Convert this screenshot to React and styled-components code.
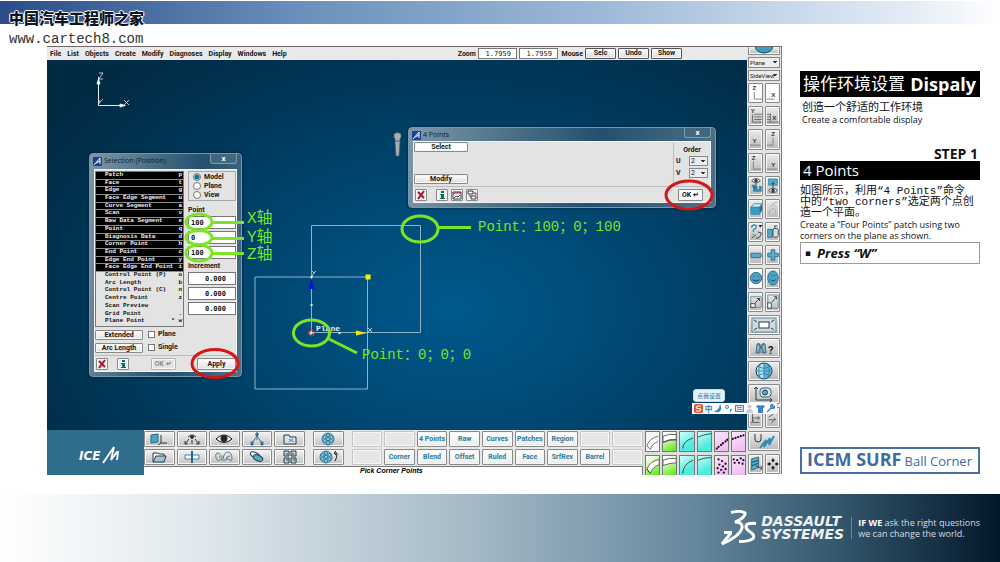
import React, { useState } from "react";
import styled, { createGlobalStyle, css } from "styled-components";

const ui = `"Roboto", "Liberation Sans", sans-serif`;
const mono = `"Liberation Mono", "Noto Sans CJK SC", monospace`;
const human = `"Open Sans", "Noto Sans CJK SC", sans-serif`;

const GlobalStyle = createGlobalStyle`
  * {
    box-sizing: border-box;
  }
  body {
    margin: 0;
    background: #fff;
    font-family: ${human};
    color: #111;
  }
  button, input, select {
    margin: 0;
    font: inherit;
    color: inherit;
  }
  h1, h2, p, ul {
    margin: 0;
    padding: 0;
    font-weight: normal;
  }
`;

/* ---------- page ---------- */

const Page = styled.div`
  display: flex;
  flex-direction: column;
  min-height: 100vh;
  position: relative;
`;

const TopBand = styled.header`
  height: 23px;
  margin-top: 1px;
  background: linear-gradient(90deg, #2b4c89 0%, #6a90bb 30%, #9db9d8 60%, #e6eef7 92%, #fff 100%);
`;

const Watermark = styled.div`
  position: absolute;
  left: 9px;
  top: 7px;
  z-index: 5;
  color: #0b1626;
`;

const WatermarkName = styled.div`
  font: 900 15px/22px "Noto Sans CJK SC", sans-serif;
  text-shadow: 1px 0 #fff, -1px 0 #fff, 0 1px #fff, 0 -1px #fff;
`;

const WatermarkUrl = styled.a`
  display: block;
  font: 14px/20px ${mono};
  color: #333;
  text-decoration: none;
`;

const Main = styled.main`
  display: grid;
  grid-template-columns: minmax(0, 1fr) 180px;
  gap: 18px;
  padding: 22px 20px 20px 47px;
`;

const Footer = styled.footer`
  display: flex;
  flex: 1;
  align-items: center;
  justify-content: flex-end;
  min-height: 68px;
  padding: 0 20px;
  color: #fff;
  background: linear-gradient(90deg, #fff 0%, #dfe8ed 20%, #a3b8c5 48%, #67889e 69%, #33566b 84%, #03172a 100%);
`;

/* ---------- modelling window ---------- */

const AppWindow = styled.section`
  position: relative;
  display: grid;
  grid-template-columns: minmax(0, 1fr) 35px;
  font: bold 7px/8px ${ui};
  color: #151515;
`;

const Workspace = styled.div`
  display: flex;
  flex-direction: column;
  min-width: 0;
`;

const MenuBar = styled.nav`
  display: flex;
  align-items: center;
  height: 14px;
  padding: 0 65px 0 3px;
  gap: 6px;
  background: #e9e9e9;
  border-top: 1px solid #76686a;
`;

const MenuItem = styled.button`
  padding: 0;
  border: 0;
  background: none;
`;

const MenuRight = styled.div`
  display: flex;
  align-items: center;
  gap: 2px;
  margin-left: auto;
`;

const ZoomInput = styled.input`
  width: 39px;
  height: 11px;
  padding: 0 5px;
  border: 1px solid #777;
  background: #fff;
  font: 7px/9px "DejaVu Sans Mono", monospace;
  text-align: right;
`;

const raised = css`
  padding: 0;
  border: 1px solid #8a8a8a;
  border-radius: 1px;
  background: linear-gradient(#fdfdfd, #dcdcdc);
  box-shadow: inset 0 0 0 1px #f6f6f6;
`;

const BarButton = styled.button`
  ${raised}
  width: 31px;
  height: 11px;
  border-color: #555;
  line-height: 9px;
`;

const Canvas = styled.div`
  position: relative;
  min-height: 370px;
  flex: 1;
  overflow: hidden;
  background: radial-gradient(ellipse 480px 320px at 58% 67%, #00598c 0%, #004c79 30%, #003d62 60%, #012b45 100%);
`;

const CanvasArt = styled.svg`
  position: absolute;
  left: 0;
  top: 0;
  width: 700px;
  height: 370px;
  pointer-events: none;
`;

const Note = styled.span`
  position: absolute;
  left: ${(p) => p.$x}px;
  top: ${(p) => p.$y}px;
  font: ${(p) => (p.$big ? "16px" : "14px")}/18px ${mono};
  color: #7ae427;
  white-space: nowrap;
`;

/* ---------- dialogs ---------- */

const Dialog = styled.div`
  position: absolute;
  left: ${(p) => p.$x}px;
  top: ${(p) => p.$y}px;
  width: ${(p) => p.$w}px;
  padding: 0 4px 4px;
  border: 1px solid #7897a8;
  border-radius: 4px;
  background: linear-gradient(100deg, #7c98a8 0%, #4f7389 30%, #235070 60%, #4d7288 100%);
  box-shadow: 0 0 3px #001a2b;
`;

const TitleBar = styled.div`
  display: flex;
  align-items: flex-start;
  height: ${(p) => p.$h}px;
  color: #0e2230;
  font: 7px/14px "Open Sans", sans-serif;
`;

const AppIcon = styled.svg`
  width: 9px;
  height: 9px;
  margin: 3px 2px 0 -1px;
`;

const CloseBox = styled.button`
  width: 27px;
  height: 10px;
  margin-left: auto;
  padding: 0;
  border: 1px solid #7f9bab;
  border-top: 0;
  border-radius: 0 0 3px 3px;
  background: #41687f;
  color: #fff;
  font: bold 8px/7px ${ui};
`;

const DialogBody = styled.div`
  background: #e3e3e3;
  border: 1px solid #f2f2f2;
`;

const DialogFooter = styled.div`
  display: flex;
  align-items: center;
  gap: ${(p) => p.$gap}px;
  height: 16px;
  padding: 0 ${(p) => p.$pad}px 0 1px;
  border-top: 1px solid #bdbdbd;
`;

const IconButton = styled.button`
  ${raised}
  display: flex;
  align-items: center;
  justify-content: center;
  width: 12px;
  height: 12px;
  background: #ececec;
  svg {
    width: 10px;
    height: 10px;
  }
`;

const PushButton = styled.button`
  ${raised}
  width: ${(p) => p.$w}px;
  height: ${(p) => p.$h || 10}px;
  line-height: 8px;
  background: ${(p) => (p.$lit ? "#fff" : "linear-gradient(#fff, #dedede)")};
  &:disabled {
    color: #8c8c8c;
    border-color: #b3b3b3;
    background: #e3e3e3;
  }
`;

const EndButton = styled(PushButton)`
  margin-left: auto;
`;

const SelectionBody = styled.div`
  display: grid;
  grid-template-columns: 89px 48px;
  justify-content: space-between;
  padding: 1px 0 3px;
`;

const Picker = styled.ul`
  display: grid;
  grid-auto-rows: 1fr;
  height: 156px;
  list-style: none;
  border: 1px solid #777;
`;

const PickerRow = styled.li`
  display: flex;
  min-height: 0;
  border-bottom: 1px solid ${(p) => (p.$on ? "#8d8d8d" : "transparent")};
  background: ${(p) => (p.$on ? "#000" : "#e3e3e3")};
  color: ${(p) => (p.$on ? "#f4f4f4" : "#111")};
`;

const PickerButton = styled.button`
  display: flex;
  flex: 1;
  justify-content: space-between;
  padding: 0 1px 0 9px;
  border: 0;
  background: none;
  font: bold 6px/6px "Liberation Mono", monospace;
  white-space: pre;
`;

const SideColumn = styled.div`
  display: flex;
  flex-direction: column;
`;

const RadioBox = styled.div`
  display: flex;
  flex-direction: column;
  gap: 1px;
  padding: 1px 4px;
  margin-bottom: 5px;
  border: 1px solid #a8a8a8;
`;

const Option = styled.label`
  display: flex;
  align-items: center;
  gap: 3px;
  height: 8px;
`;

const Radio = styled.input`
  appearance: none;
  width: 8px;
  height: 8px;
  margin: 0;
  border: 1px solid #777;
  border-radius: 50%;
  background: #fff;
  &:checked {
    background: radial-gradient(circle, #1577a5 0 2px, #d7ecf5 3px);
  }
`;

const Check = styled.input`
  appearance: none;
  width: 7px;
  height: 7px;
  border: 1px solid #777;
  background: #fff;
`;

const FieldLabel = styled.div`
  height: 10px;
`;

const Fields = styled.div`
  display: flex;
  flex-direction: column;
  gap: 2px;
  margin-bottom: 3px;
`;

const NumberInput = styled.input`
  width: 100%;
  height: 13px;
  padding: 0 ${(p) => (p.$right ? 9 : 2)}px;
  border: 1px solid #777;
  background: #fff;
  font: bold 7px/10px "DejaVu Sans Mono", monospace;
  text-align: ${(p) => (p.$right ? "right" : "left")};
`;

const OptionRows = styled.div`
  display: grid;
  grid-template-columns: 48px 1fr;
  gap: 3px 5px;
  padding-bottom: 2px;
`;

const PointsBody = styled.div`
  display: flex;
  justify-content: space-between;
  height: 44px;
`;

const ActionColumn = styled.div`
  display: flex;
  flex-direction: column;
  justify-content: space-between;
  padding-bottom: 2px;
`;

const OrderPanel = styled.div`
  display: flex;
  flex-direction: column;
  gap: 2px;
  width: 37px;
  padding: 4px 2px 0;
  border-left: 1px solid #bdbdbd;
  text-align: center;
`;

const OrderRow = styled.label`
  display: flex;
  align-items: center;
  justify-content: space-between;
`;

const SmallSelect = styled.select`
  appearance: none;
  height: ${(p) => p.$h || 10}px;
  width: ${(p) => p.$w || "19px"};
  padding: 0 1px;
  border: 1px solid #888;
  border-radius: 0;
  background: linear-gradient(135deg, #333 50%, transparent 50%) calc(100% - 2px) 3px / 2px 3px no-repeat,
    linear-gradient(225deg, #333 50%, transparent 50%) calc(100% - 4px) 3px / 2px 3px no-repeat, #ececec;
  font: ${(p) => p.$size || "7px"}/8px ${ui};
`;

/* ---------- bottom tools ---------- */

const BottomBar = styled.div`
  display: grid;
  grid-template-columns: 97px minmax(0, 1fr) 104px;
  height: 44px;
`;

const LogoCell = styled.div`
  display: flex;
  align-items: center;
  justify-content: center;
  padding: 4px 0 0 6px;
  background: #306d8c;
  color: #fff;
  svg {
    width: 42px;
    height: 20px;
  }
`;

const Tools = styled.div`
  display: flex;
  flex-direction: column;
  background: #e8e8e8;
`;

const ToolRow = styled.div`
  display: flex;
  gap: 2px;
  height: 18px;
  padding: 1px 0;
`;

const ToolButton = styled.button`
  ${raised}
  display: flex;
  align-items: center;
  justify-content: center;
  flex: 1 1 0;
  min-width: 0;
  margin-left: ${(p) => (p.$gap ? "6px" : 0)};
  color: #2a7a9b;
  background: ${(p) => (p.$label ? "linear-gradient(#fff, #ececec)" : "linear-gradient(#f3f3f3, #c2c2c2)")};
  svg {
    width: 20px;
    height: 14px;
  }
  &:disabled {
    border-color: #c4c4c4;
    background: #e6e6e6;
  }
`;

const StatusLine = styled.div`
  flex: 1;
  padding-left: 216px;
  border-top: 1px solid #777;
  border-right: 1px solid #777;
  background: #fff;
  color: #000;
  font: italic bold 7px/8px "Liberation Sans", sans-serif;
`;

const Palette = styled.div`
  display: grid;
  grid-template-columns: repeat(6, 1fr);
  grid-auto-rows: 21px;
  gap: 3px 2px;
  padding: 1px 1px 0 2px;
  overflow: hidden;
  background: #dedede;
`;

const Swatch = styled.button`
  padding: 0;
  border: 1px solid #777;
  background: ${(p) => p.$fill};
  svg {
    display: block;
    width: 100%;
    height: 100%;
  }
`;

/* ---------- right tool strip ---------- */

const Strip = styled.aside`
  display: flex;
  flex-direction: column;
  gap: 2px;
  padding: 0 1px;
  border-top: 1px solid #76686a;
  border-right: 1px solid #8a7c7e;
  background: #e4e4e4;
`;

const StripGrid = styled.div`
  display: grid;
  flex: 1;
  grid-template-columns: 1fr 1fr;
  grid-auto-rows: 1fr;
  gap: 3px 2px;
`;

const StripButton = styled.button`
  ${raised}
  display: flex;
  align-items: center;
  justify-content: center;
  min-height: 0;
  overflow: hidden;
  grid-column: ${(p) => (p.$wide ? "span 2" : "auto")};
  background: ${(p) => (p.$lit ? "#fff" : "linear-gradient(#ededed, #b9b9b9)")};
  svg {
    width: ${(p) => (p.$wide ? "26px" : "14px")};
    height: 18px;
    flex: none;
  }
`;

const GlobeButton = styled(StripButton)`
  height: 8px;
  border-top: 0;
  align-items: flex-start;
  svg {
    height: 7px;
  }
`;

/* ---------- input method bar ---------- */

const ImeTip = styled.div`
  position: absolute;
  right: 57px;
  top: 343px;
  padding: 0 3px;
  border: 1px solid #c9dde8;
  border-radius: 3px;
  background: #e4f2f8;
  color: #3d6f92;
  font: 6px/11px "Noto Sans CJK SC", sans-serif;
`;

const ImeBar = styled.div`
  position: absolute;
  right: 5px;
  top: 357px;
  display: flex;
  align-items: center;
  justify-content: space-between;
  width: 85px;
  height: 11px;
  padding: 0 2px;
  background: #fdfdfd;
  color: #3b84c4;
  font: bold 8px/10px "Noto Sans CJK SC", sans-serif;
  svg {
    width: 9px;
    height: 9px;
  }
`;

/* ---------- lesson column ---------- */

const Lesson = styled.article`
  display: flex;
  flex-direction: column;
  padding-top: 25px;
`;

const LessonTitle = styled.h1`
  display: flex;
  align-items: center;
  justify-content: space-between;
  height: 26px;
  padding: 0 4px 0 3px;
  background: #000;
  color: #fff;
  font-size: 17px;
  line-height: 26px;
  white-space: nowrap;
  b {
    font-size: 18px;
    font-weight: 700;
  }
`;

const Chinese = styled.p`
  padding-left: ${(p) => p.$in || 0}px;
  margin-top: 6px;
  font: 11px/11px ${mono};
  white-space: nowrap;
`;

const English = styled.p`
  padding-left: ${(p) => p.$in || 0}px;
  font-size: 9px;
  line-height: 11px;
  white-space: nowrap;
`;

const Step = styled.p`
  margin-top: 22px;
  padding-right: 2px;
  text-align: right;
  font-size: 14px;
  font-weight: bold;
  line-height: 14px;
`;

const StepTitle = styled.h2`
  padding-left: 3px;
  background: #000;
  color: #fff;
  font-size: 15px;
  line-height: 19px;
`;

const KeyHint = styled.p`
  display: flex;
  align-items: center;
  gap: 6px;
  margin-top: 1px;
  padding-left: 4px;
  border: 1px solid #9a9a9a;
  font-size: 13px;
  font-style: italic;
  font-weight: bold;
  line-height: 20px;
  span {
    font: 9px/20px "DejaVu Sans", sans-serif;
  }
`;

const Product = styled.p`
  display: flex;
  align-items: baseline;
  justify-content: space-between;
  margin-top: auto;
  padding: 0 6px 0 5px;
  border: 2px solid #4a6fa5;
  color: #426a9f;
  font-size: 13px;
  line-height: 21px;
  white-space: nowrap;
  b {
    font-size: 18px;
  }
`;

/* ---------- footer ---------- */

const Brand = styled.div`
  display: flex;
  align-items: center;
  gap: 4px;
  svg {
    width: 38px;
    height: 36px;
  }
`;

const BrandName = styled.div`
  font: italic bold 14px/13px "DejaVu Sans", sans-serif;
  color: #eef2f5;
`;

const Tagline = styled.p`
  margin-left: 7px;
  padding-left: 6px;
  border-left: 1px solid #6f8797;
  color: #d5dde3;
  font: 9px/11px "Open Sans", sans-serif;
  white-space: nowrap;
  b {
    color: #fff;
  }
`;

/* ---------- icons ---------- */

const blue = "#2f8db8";
const dark = "#2a3a44";

const Svg = ({ w = 16, h = 20, children }) => (
  <svg viewBox={`0 0 ${w} ${h}`} fill="none" stroke={dark} strokeWidth="1" aria-hidden="true">
    {children}
  </svg>
);

const Letter = ({ x, y, children }) => (
  <text x={x} y={y} stroke="none" fill="#333" fontSize="7" fontFamily="Liberation Sans">
    {children}
  </text>
);

const Logo = () => (
  <AppIcon viewBox="0 0 9 9" aria-hidden="true">
    <rect width="9" height="9" rx="1" fill="#1b3f95" />
    <path d="M1 8 7 1v6M3 6l4-2" stroke="#fff" fill="none" />
  </AppIcon>
);

const Cross = () => (
  <Svg w={10} h={10}>
    <path d="m2 2 6 6M8 1 2 9" stroke="#b3122e" strokeWidth="2" />
  </Svg>
);

const Info = () => (
  <Svg w={10} h={10}>
    <path d="M4 1h3v2H4zM3 4h4v4h1v1H3V8h1V5H3z" fill="#0c6b67" stroke="none" />
  </Svg>
);

const Globe = () => (
  <Svg w={26} h={18}>
    <circle cx="13" cy="9" r="8" fill="#bfe0ec" stroke="#22333d" />
    <path d="M13 1v16M5 9h16M7 4c4 3 8 3 12 0M7 14c4-3 8-3 12 0M10 1c-3 5-3 11 0 16M16 1c3 5 3 11 0 16" stroke={blue} />
    <path d="M13 1a8 8 0 0 1 0 16z" fill={blue} fillOpacity=".6" stroke="none" />
  </Svg>
);

const Eye = ({ y = 4 }) => (
  <g>
    <path d={`M3 ${y}q5-5 10 0q-5 5-10 0z`} fill="#fff" />
    <circle cx="8" cy={y} r="2" fill={dark} stroke="none" />
  </g>
);

const Flower = () => (
  <g fill="#9fd0e2" stroke="#2d7c9d">
    <circle cx="10" cy="7" r="6" />
    <circle cx="10" cy="7" r="1.6" />
    <circle cx="10" cy="3.2" r="1.6" />
    <circle cx="10" cy="10.8" r="1.6" />
    <circle cx="6.6" cy="5" r="1.6" />
    <circle cx="13.4" cy="5" r="1.6" />
    <circle cx="6.6" cy="9" r="1.6" />
    <circle cx="13.4" cy="9" r="1.6" />
  </g>
);

const Dots = ({ at }) => (
  <g fill="#1d1220" stroke="none">
    {at.map(([x, y]) => (
      <circle key={`${x}-${y}`} cx={x} cy={y} r="1.3" />
    ))}
  </g>
);

const stripIcons = [
  { name: "View ZX", lit: true, art: <><Letter x="4" y="7">Z</Letter><path d="M6 9v8h9" stroke="#777" /></> },
  { name: "View X", lit: true, art: <><Letter x="6" y="15">X</Letter><path d="M1 17h9" stroke="#777" /></> },
  { name: "View Y grid", art: <><Letter x="2" y="7">Y</Letter><path d="M4 8v9h11M6 14h9M6 11h9M6 8h9" stroke="#666" /></> },
  { name: "View X grid", art: <><Letter x="7" y="15">X</Letter><path d="M1 17h14M1 14h4M1 11h4M1 8h4M5 7v10" stroke="#666" /></> },
  { name: "View Y", art: <><Letter x="4" y="15">Y</Letter><path d="M1 17h12" stroke="#777" /></> },
  { name: "View Z", art: <><Letter x="6" y="7">Z</Letter><path d="M8 8v9H1" stroke="#777" /></> },
  { name: "View Z left", art: <><Letter x="3" y="7">Z</Letter><path d="M5 8v9h9" stroke="#777" /></> },
  { name: "View Y right", art: <><Letter x="6" y="15">Y</Letter><path d="M1 17h12" stroke="#777" /></> },
  { name: "Look down", art: <><Eye /><path d="M3 10h3v5h7v-5" fill="none" stroke={blue} strokeWidth="3" /><path d="M8 7v6m-2-2 2 2 2-2" /></> },
  { name: "Look up", art: <><path d="M3 2h10v7H3z" fill="#58abc9" stroke={blue} /><Eye y={15} /><path d="M8 12V6M6 8l2-2 2 2" /></> },
  { name: "Solid", art: <><path d="m2 8 4-4h9l-3 4z" fill="#d9eff7" stroke={blue} /><path d="M2 8h10v8H2z" fill="#3c9cc2" stroke={blue} /><path d="m12 8 3-4v7l-3 5z" fill="#1c6d92" stroke={blue} /></> },
  { name: "Ghost", art: <path d="M4 17v-5l4-3 3 2v5M5 8l3-4 3 3M9 3l4-1" stroke="#aaa" /> },
  { name: "Query axes", art: <><path d="M3 5q0-3 3-3t2 3l-3 3v2M5 12v1" stroke={blue} strokeWidth="1.5" /><path d="M3 17l5-4M8 17q6 0 6-6M10 10l4 1" /><path d="M11 2h4l-2 3z" fill="#222" stroke="none" /></> },
  { name: "Cans", art: <><rect x="2" y="7" width="5" height="9" fill="#58abc9" stroke="#1c6d92" /><rect x="8" y="6" width="6" height="10" rx="2" fill="#ddd" /><path d="M10 6V3h3" /></> },
  { name: "Minus", art: <rect x="2" y="8" width="12" height="5" rx="1" fill="#58abc9" stroke="#23698a" /> },
  { name: "Plus", art: <path d="M6 4h4v4h4v4h-4v4H6v-4H2V8h4z" fill="#58abc9" stroke="#23698a" /> },
  { name: "Sphere", lit: true, art: <><circle cx="8" cy="10" r="6.5" fill="#4ba4c6" stroke="#1d688a" /><path d="M5 8h1M10 8h1M4 12q4 3 8 0" /></> },
  { name: "Ellipsoid", art: <><ellipse cx="8" cy="10" rx="6" ry="8" fill="#4ba4c6" stroke="#1d688a" /><path d="M6 7h1M9 7h1M5 12q3 3 6 0" /></> },
  { name: "Scale up", art: <><path d="M2 4h12v12H2z" stroke="#5b8ea5" /><rect x="2" y="12" width="5" height="4" fill="#fff" /><path d="m7 11 5-5M9 6h3v3" /></> },
  { name: "Scale up tall", art: <><path d="M2 2h12v15H2z" stroke="#5b8ea5" /><rect x="2" y="11" width="4" height="6" fill="#fff" /><path d="m7 10 5-6M9 4h3v3" /></> },
  { name: "Fit", wide: true, art: <><rect x="1" y="2" width="24" height="14" fill="#cfdbe1" stroke="#5b8ea5" /><rect x="8" y="6" width="10" height="6" fill="#fff" /><path d="m3 4 3 2M23 4l-3 2M3 14l3-2M23 14l-3-2" /></> },
  { name: "Find", wide: true, art: <><path d="M6 5h3v9H5zM11 5h3l1 9h-4z" fill="#8fbccd" stroke="#3d6a80" /><path d="M9 8h2M7 4l7 10M13 4 6 14" stroke="#3d6a80" /><text x="17" y="15" fontSize="11" fontWeight="bold" fill="#222" stroke="none">?</text></> },
  { name: "Wire globe", wide: true, globe: true },
  { name: "Camera", wide: true, art: <><path d="M5 2v13h16M3 4l2-2 2 2M19 13l2 2-2 2" /><rect x="9" y="3" width="11" height="9" rx="3" fill="#cfe3ec" stroke="#3d6a80" /><circle cx="14" cy="7.5" r="2.5" fill="#58abc9" /></> },
  { name: "Local axes", art: <path d="M4 3v12h8M4 10h8m-2-2 2 2-2 2M2 16l4-4" stroke="#555" /> },
  { name: "Move axes", art: <path d="M3 12h8m-2-2 2 2M3 9l9-6M9 3h3v3M6 16l4-4" stroke="#555" /> },
  { name: "Brush", wide: true, art: <><path d="M4 2v5q0 3 3 3t3-3V2" stroke="#333" /><path d="m9 16 6-8-2 7 6-9-1 7 5-9" stroke={blue} strokeWidth="2" /></> },
  { name: "Sheet", art: <><path d="m3 4 8-2v12l-8 3z" fill="#58abc9" stroke="#23698a" /><path d="M3 8l8-2M3 12l8-3M8 12l6 3M14 12v5" /></> },
  { name: "Pan", art: <path d="m8 3 2 3-2 2-2-2zM8 12l2 2-2 3-2-3zM1 10l3-2 2 2-2 2zM15 10l-3-2-2 2 2 2z" fill="#222" stroke="none" /> },
];

const topTools = [
  { name: "Plane axes", art: <><path d="m2 3 7-1v8l-7 1z" fill="#4ba4c6" stroke="#1d688a" /><path d="M12 3v8h6M12 11l-3 2" /></> },
  { name: "Look around", art: <><path d="M6 5q4-4 8 0" /><circle cx="10" cy="5" r="1.5" fill={dark} /><path d="m7 7-4 5M13 7l4 5M10 8v4M3 9v3h3M17 9v3h-3" /></> },
  { name: "Visibility", art: <><path d="M2 7q8-8 16 0-8 7-16 0z" fill="#fff" stroke="#111" /><circle cx="10" cy="6.5" r="3.2" fill="#222" /></> },
  { name: "Tree", art: <><path d="m10 4-5 7M10 4l5 7M10 4v4" stroke="#2d7c9d" /><path d="M9 1h2v3H9zM4 10h2v3H4zM14 10h2v3h-2z" fill={blue} stroke="#2d6c8a" /></> },
  { name: "Stage", art: <><path d="M4 3h5l1 2h6v7H4z" fill="#d7e3e8" /><path d="m9 7 5 3M9 10l4-3" stroke={blue} /></> },
  { name: "Mesh", gap: true, art: <Flower /> },
  { gap: true },
  {},
  { label: "4 Points" },
  { label: "Raw" },
  { label: "Curves" },
  { label: "Patches" },
  { label: "Region" },
  {},
  {},
];

const bottomTools = [
  { name: "Open", art: <><path d="M4 12V3h5l1 1h5v2" fill="#fff" /><path d="M4 12 7 6h10l-2 6z" fill="#9cc9da" /></> },
  { name: "Section", art: <><path d="M3 5h14v4H3z" fill="#fff" stroke={blue} /><path d="M10 1v12" stroke="#23698a" strokeWidth="2" /></> },
  { name: "Link", art: <path d="M6 5Q5 2 3 3T2 8t4 2 2-4-3 2M7 10h5M9 9q1-7 5-7t4 8M12 8l6 3M16 6q-3-1-4 4" stroke="#5a7c8c" /> },
  { name: "Layers", art: <><ellipse cx="8" cy="5" rx="5" ry="2.5" transform="rotate(25 8 5)" fill="#fff" /><ellipse cx="11" cy="8" rx="5" ry="2.8" transform="rotate(25 11 8)" fill="#58abc9" /></> },
  { name: "Windows", art: <><path d="M4 1h5v5H4zM11 1h5v5h-5zM4 8h5v5H4zM11 8h5v5h-5z" fill="#b8d5e0" /><path d="M6 4h2M13 3v2M6 10h2M13 10h2" /></> },
  { name: "Mesh return", gap: true, art: <><g transform="translate(-2 0)"><Flower /></g><path d="M16 3h3q0 5-2 8M16 3l2-2M16 3l2 2" stroke="#222" /></> },
  { gap: true },
  { label: "Corner" },
  { label: "Blend" },
  { label: "Offset" },
  { label: "Ruled" },
  { label: "Face" },
  { label: "SrfRev" },
  { label: "Barrel" },
  {},
];

const green = "linear-gradient(150deg, #fff 10%, #baf58a 50%, #52e80e)";
const cyan = "linear-gradient(150deg, #d5fff9, #4debdd 70%)";
const pink = "linear-gradient(150deg, #fbe6fb, #efb7ef)";

const swatches = [
  { fill: "#f6f6f6", art: <path d="M1 15q3-9 13-11M5 19q2-7 9-9M1 15l4 4" stroke="#666" /> },
  { fill: green, art: <><path d="M0 4q7-3 15-2v6Q8 7 0 11z" fill="#fff" stroke="#555" /><path d="M0 11q7-4 15-3" /></> },
  { fill: cyan, art: <path d="M3 18Q4 9 15 6" /> },
  { fill: cyan, art: <path d="M0 5q6-3 15-4" /> },
  { fill: pink, art: <Dots at={[[2, 18], [4, 16], [7, 14], [9, 12], [12, 10], [14, 8]]} /> },
  { fill: pink, art: <Dots at={[[1, 7], [4, 6], [7, 5], [10, 4], [13, 3]]} /> },
  { fill: green, art: <><path d="M1 14Q5 5 15 3v6Q8 11 5 19z" fill="#fff" stroke="#555" /><path d="M1 14l4 5" /></> },
  { fill: green, art: <path d="M0 4q7-3 15-2v5Q8 7 0 10z" fill="#fff" stroke="#555" /> },
  { fill: cyan, art: <path d="M3 19Q4 8 15 4" /> },
  { fill: cyan, art: <path d="M0 4q6-3 15-3" /> },
  { fill: pink, art: <Dots at={[[4, 3], [8, 5], [12, 8], [5, 9], [9, 11], [3, 13], [12, 14], [7, 15], [4, 18], [10, 18]]} /> },
  { fill: pink, art: <Dots at={[[2, 3], [6, 4], [10, 2], [13, 4], [3, 7], [8, 7], [12, 8]]} /> },
];

const entities = [
  ["Patch", "p", true],
  ["Face", "t", true],
  ["Edge", "g", true],
  ["Face Edge Segment", "u", true],
  ["Curve Segment", "a", true],
  ["Scan", "v", true],
  ["Raw Data Segment", "e", true],
  ["Point", "q", true],
  ["Diagnosis Data", "d", true],
  ["Corner Point", "h", true],
  ["End Point", "c", true],
  ["Edge End Point", "y", true],
  ["Face Edge End Point", "i", true],
  ["Control Point (P)", "o"],
  ["Arc Length", "b"],
  ["Control Point (C)", "n"],
  ["Centre Point", "z"],
  ["Scan Preview", " "],
  ["Grid Point", "."],
  ["Plane Point", "* w"],
];

const menus = ["File", "List", "Objects", "Create", "Modify", "Diagnoses", "Display", "Windows", "Help"];

/* ---------- components ---------- */

const SelectionDialog = () => {
  const [mode, setMode] = useState("Model");
  return (
    <Dialog $x={42} $y={93} $w={153} role="dialog" aria-label="Selection">
      <TitleBar $h={15}>
        <Logo />
        Selection (Position)
        <CloseBox aria-label="Close">x</CloseBox>
      </TitleBar>
      <DialogBody>
        <SelectionBody>
          <Picker>
            {entities.map(([name, key, on]) => (
              <PickerRow key={name} $on={on}>
                <PickerButton>
                  <span>{name}</span>
                  <span>{key}</span>
                </PickerButton>
              </PickerRow>
            ))}
          </Picker>
          <SideColumn>
            <RadioBox>
              {["Model", "Plane", "View"].map((m) => (
                <Option key={m}>
                  <Radio type="radio" name="mode" checked={mode === m} onChange={() => setMode(m)} />
                  {m}
                </Option>
              ))}
            </RadioBox>
            <FieldLabel>Point</FieldLabel>
            <Fields>
              <NumberInput aria-label="Point X" defaultValue="100" />
              <NumberInput aria-label="Point Y" defaultValue="0" />
              <NumberInput aria-label="Point Z" defaultValue="100" />
            </Fields>
            <FieldLabel>Increment</FieldLabel>
            <Fields>
              <NumberInput $right aria-label="Increment X" defaultValue="0.000" />
              <NumberInput $right aria-label="Increment Y" defaultValue="0.000" />
              <NumberInput $right aria-label="Increment Z" defaultValue="0.000" />
            </Fields>
          </SideColumn>
        </SelectionBody>
        <OptionRows>
          <PushButton $w={48}>Extended</PushButton>
          <Option>
            <Check type="checkbox" />
            Plane
          </Option>
          <PushButton $w={48}>Arc Length</PushButton>
          <Option>
            <Check type="checkbox" />
            Single
          </Option>
        </OptionRows>
        <DialogFooter $gap={9} $pad={0}>
          <IconButton aria-label="Cancel"><Cross /></IconButton>
          <IconButton aria-label="Info"><Info /></IconButton>
          <EndButton $w={25} $h={12} disabled>OK ↵</EndButton>
          <EndButton $w={39} $h={12}>Apply</EndButton>
        </DialogFooter>
      </DialogBody>
    </Dialog>
  );
};

const PointsDialog = () => (
  <Dialog $x={361} $y={67} $w={308} role="dialog" aria-label="4 Points">
    <TitleBar $h={13}>
      <Logo />
      4 Points
      <CloseBox aria-label="Close">x</CloseBox>
    </TitleBar>
    <DialogBody>
      <PointsBody>
        <ActionColumn>
          <PushButton $w={54} $lit>Select</PushButton>
          <PushButton $w={54}>Modify</PushButton>
        </ActionColumn>
        <OrderPanel>
          Order
          {["U", "V"].map((axis) => (
            <OrderRow key={axis}>
              {axis}
              <SmallSelect defaultValue="2">
                <option>2</option>
                <option>3</option>
              </SmallSelect>
            </OrderRow>
          ))}
        </OrderPanel>
      </PointsBody>
      <DialogFooter $gap={3} $pad={7}>
        <IconButton aria-label="Cancel"><Cross /></IconButton>
        <span />
        <span />
        <IconButton aria-label="Info"><Info /></IconButton>
        <IconButton aria-label="Picture">
          <Svg w={10} h={10}><path d="M1 2h8v7H1z" fill="#fff" /><path d="M1 3h8" stroke="#b3122e" /><path d="m2 8 2-2 2 1 2-2" /></Svg>
        </IconButton>
        <IconButton aria-label="Copy">
          <Svg w={10} h={10}><path d="M1 1h5v3H1zM4 6h5v3H4z" fill="#fff" /><path d="M7 3h2v2M3 5v2" stroke="#b3122e" /></Svg>
        </IconButton>
        <EndButton $w={25} $h={12} $lit>OK ↵</EndButton>
      </DialogFooter>
    </DialogBody>
  </Dialog>
);

const Scene = () => (
  <CanvasArt viewBox="47 60 700 370" fill="none" aria-hidden="true">
    <g stroke="#e8eef2">
      <path d="M98.5 77v28.5h27" />
      <path d="m97 84 1.5-5 1.5 5zM120 104l5 1.5-5 1.5z" fill="#fff" />
    </g>
    <g stroke="#dfe7ec" strokeWidth=".8">
      <path d="M99 73h4l-4 6h4M98 99l2 3 3-3M100 102l-2 3M124 100l5 5M129 100l-5 5" />
      <path d="M312 271l2 2 2-2M314 273l-2 3M368 328l4 4M372 328l-4 4" />
    </g>
    <g stroke="#8fb2c6">
      <path d="M311.5 333V225.5H420.5V332.5H312" />
      <path d="M255 277h112.5v112H255z" />
    </g>
    <path d="m311.5 278 3 11h-6z" fill="#0b12d8" />
    <path d="m367 333-11-2.5v5z" fill="#f2e500" />
    <path d="M365.5 274.5h5v5h-5z" fill="#fdf000" />
    <path d="M310.5 304h2v2h-2zM338.5 332h2v2h-2zM310.5 276h2v2h-2z" fill="#fff" />
    <circle cx="311.5" cy="333" r="3" stroke="#d0342c" />
    <path d="M311 331v4M309 333h5" stroke="#fff" />
    <text x="316" y="331" fill="#e6edf2" fontSize="8" fontWeight="bold" fontFamily="Liberation Mono">Plane</text>
    <path d="M394 134q3.5-3 7 0v4h-1v3l-1 15h-3l-1-15v-3h-1z" fill="#a9b0b3" stroke="#4c5a62" strokeWidth=".6" />
    <path d="M395 141h5" stroke="#555" />
  </CanvasArt>
);

const Marks = () => (
  <CanvasArt viewBox="47 60 700 370" fill="none" aria-hidden="true">
    <g stroke="#7ae427" strokeWidth="3">
      <ellipse cx="420" cy="229" rx="18" ry="13" />
      <path d="M439 227.5h32M329 339l28 14" />
      <ellipse cx="311.5" cy="333" rx="18" ry="13" />
      <ellipse cx="199" cy="222" rx="13" ry="8" />
      <ellipse cx="199" cy="237.5" rx="13" ry="7" />
      <ellipse cx="199" cy="253" rx="13" ry="8" />
      <path d="M212 222.5h32M212 238.5h32M212 253.5h32" />
    </g>
    <g stroke="#d31717" strokeWidth="3">
      <ellipse cx="215" cy="363.5" rx="23" ry="14" />
      <ellipse cx="689" cy="195" rx="23" ry="14" />
    </g>
  </CanvasArt>
);

const Tool = ({ name, label, art, gap }) => (
  <ToolButton $gap={gap} $label={label} disabled={!name && !label} aria-label={name}>
    {label || (art && <Svg w={20} h={14}>{art}</Svg>)}
  </ToolButton>
);

const ToolStrip = () => (
  <Strip>
    <GlobeButton $wide aria-label="World">
      <Svg w={26} h={7}><ellipse cx="13" cy="-1" rx="9" ry="7" fill="#3c9cc2" stroke="#1b4c63" /></Svg>
    </GlobeButton>
    <SmallSelect aria-label="Plane" $w="100%" $h={11} $size="6px">
      <option>Plane</option>
    </SmallSelect>
    <SmallSelect aria-label="View" $w="100%" $h={11} $size="6px">
      <option>SideView</option>
    </SmallSelect>
    <StripGrid>
      {stripIcons.map(({ name, lit, wide, globe, art }) => (
        <StripButton key={name} $lit={lit} $wide={wide} aria-label={name}>
          {globe ? <Globe /> : <Svg w={wide ? 26 : 16} h={wide ? 18 : 20}>{art}</Svg>}
        </StripButton>
      ))}
    </StripGrid>
  </Strip>
);

const InputMethod = () => (
  <>
    <ImeTip>点我设置</ImeTip>
    <ImeBar>
      <svg viewBox="0 0 9 9"><rect width="9" height="9" rx="2" fill="#e8502a" /><path d="M7 2H3L2 4l5 1-1 2H2" stroke="#fff" fill="none" /></svg>
      中
      <svg viewBox="0 0 9 9"><path d="M6 0q3 5-1 8-3 1-5-1 5 0 6-7z" fill="#3b84c4" /></svg>
      <svg viewBox="0 0 9 9"><circle cx="3" cy="3" r="1.5" stroke="#3b84c4" fill="none" /><path d="M6 5h2L6 9z" fill="#3b84c4" /></svg>
      <svg viewBox="0 0 9 9"><path d="M.5 1.5h8v6h-8z" fill="#dcebf7" stroke="#3b84c4" /><path d="M2 3.5h5M2 5.5h5" stroke="#3b84c4" strokeWidth=".8" /></svg>
      <svg viewBox="0 0 9 9"><circle cx="4.5" cy="2.5" r="2" fill="#ccd" /><path d="M1 9q0-4 3.5-4T8 9z" fill="#ccd" /></svg>
      <svg viewBox="0 0 9 9"><path d="m0 2 3-1q1.5 1 3 0l3 1-1 2-1-.5V9H2V3.5L1 4z" fill="#3b84c4" /></svg>
      <svg viewBox="0 0 9 9"><path d="m1 8 4-4M5 4q-1-3 2-4l-1 2 1 1 2-1q0 3-4 2z" stroke="#3b84c4" strokeWidth="1.4" fill="none" /></svg>
    </ImeBar>
  </>
);

const App = () => (
  <>
    <GlobalStyle />
    <Page>
      <TopBand />
      <Watermark>
        <WatermarkName>中国汽车工程师之家</WatermarkName>
        <WatermarkUrl href="#home">www.cartech8.com</WatermarkUrl>
      </Watermark>
      <Main>
        <AppWindow>
          <Workspace>
            <MenuBar>
              {menus.map((m) => (
                <MenuItem key={m}>{m}</MenuItem>
              ))}
              <MenuRight>
                <label htmlFor="zoom">Zoom</label>
                <ZoomInput id="zoom" defaultValue="1.7959" />
                <ZoomInput aria-label="Zoom Y" defaultValue="1.7959" />
                <span>&nbsp;Mouse</span>
                <BarButton>Selc</BarButton>
                <BarButton>Undo</BarButton>
                <BarButton>Show</BarButton>
              </MenuRight>
            </MenuBar>
            <Canvas>
              <Scene />
              <SelectionDialog />
              <PointsDialog />
              <Marks />
              <Note $x={200} $y={150} $big>X轴</Note>
              <Note $x={200} $y={169} $big>Y轴</Note>
              <Note $x={200} $y={186} $big>Z轴</Note>
              <Note $x={431} $y={158}>Point：100；0；100</Note>
              <Note $x={315} $y={286}>Point：0；0；0</Note>
            </Canvas>
            <BottomBar>
              <LogoCell>
                <svg viewBox="0 0 42 20" role="img" aria-label="ICEM">
                  <text x="1" y="15" fill="#fff" fontSize="12" fontWeight="bold" fontStyle="italic" fontFamily="DejaVu Sans">ICE</text>
                  <path d="M25 18 36 2l-3 13 6-8h1l-1 8" stroke="#fff" strokeWidth="1.8" fill="none" />
                </svg>
              </LogoCell>
              <Tools>
                <ToolRow>
                  {topTools.map((t, i) => (
                    <Tool key={i} {...t} />
                  ))}
                </ToolRow>
                <ToolRow>
                  {bottomTools.map((t, i) => (
                    <Tool key={i} {...t} />
                  ))}
                </ToolRow>
                <StatusLine>Pick Corner Points</StatusLine>
              </Tools>
              <Palette>
                {swatches.map((s, i) => (
                  <Swatch key={i} $fill={s.fill} aria-label={`Shade ${i + 1}`}>
                    <Svg w={15} h={20}>{s.art}</Svg>
                  </Swatch>
                ))}
              </Palette>
            </BottomBar>
          </Workspace>
          <ToolStrip />
          <InputMethod />
        </AppWindow>
        <Lesson>
          <LessonTitle>
            操作环境设置 <b>Dispaly</b>
          </LessonTitle>
          <Chinese $in={2}>创造一个舒适的工作环境</Chinese>
          <English $in={2}>Create a comfortable display</English>
          <Step>STEP 1</Step>
          <StepTitle>4 Points</StepTitle>
          <Chinese>
            如图所示，利用“4 Points”命令
            <br />
            中的“two corners”选定两个点创
            <br />
            造一个平面。
          </Chinese>
          <English>
            Create a “Four Points” patch using two
            <br />
            corners on the plane as shown.
          </English>
          <KeyHint>
            <span>▪</span>Press “W”
          </KeyHint>
          <Product>
            <b>ICEM SURF</b> Ball Corner
          </Product>
        </Lesson>
      </Main>
      <Footer>
        <Brand>
          <svg viewBox="0 0 38 36" fill="none" stroke="#fff" strokeWidth="3" role="img" aria-label="3DS">
            <path d="M12 2.5Q22 0 26 3q1 4-10 9 8 0 7 6-2 8-20 16" />
            <path d="M5 22.5h8M12 23 3 34" />
            <path d="M37 13.5q-10-1-10 3 0 3 5 6 4 3 2 6-3 3-14 3" />
          </svg>
          <BrandName>
            DASSAULT
            <br />
            SYSTEMES
          </BrandName>
        </Brand>
        <Tagline>
          <b>IF WE</b> ask the right questions
          <br />
          we can change the world.
        </Tagline>
      </Footer>
    </Page>
  </>
);

export default App;
